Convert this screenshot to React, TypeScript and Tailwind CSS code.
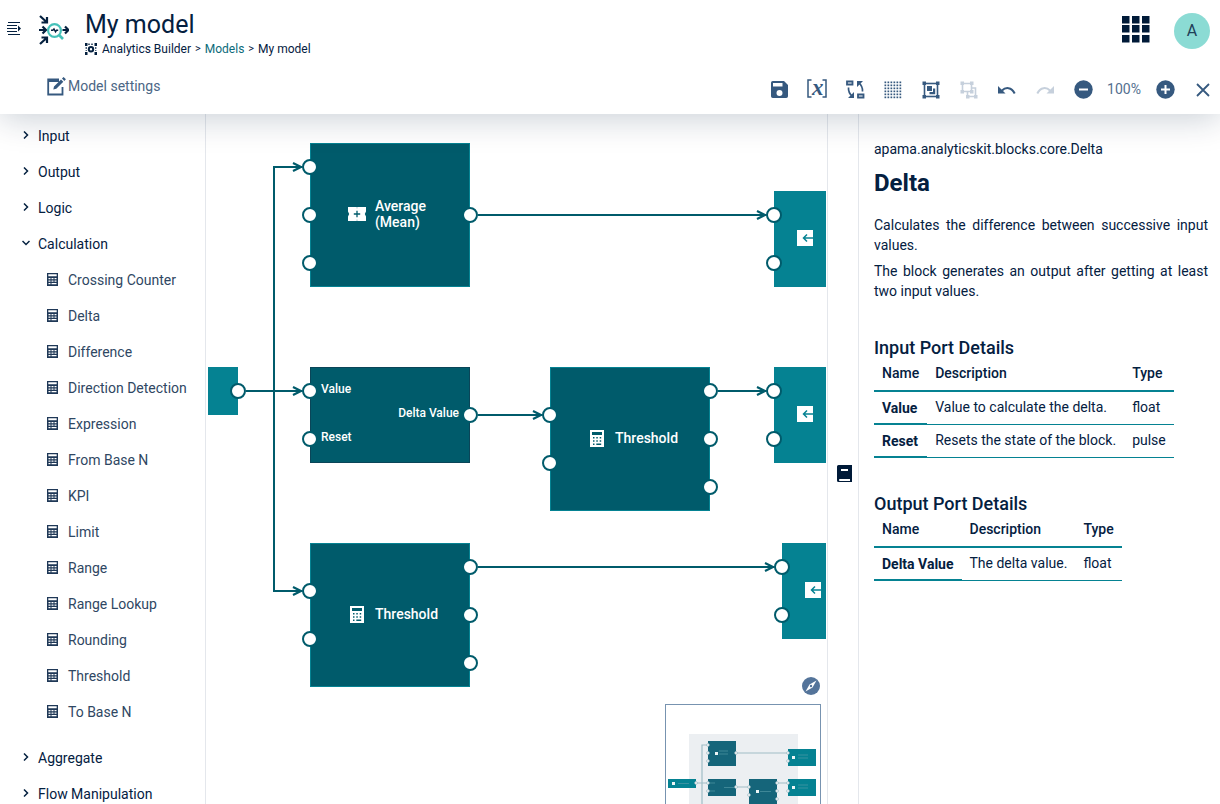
import React from "react";

type IconProps = { className?: string };

/* ---------- icons ---------- */

const MenuIcon = () => (
  <svg width="14" height="13" viewBox="0 0 14 13" fill="#04203f" aria-hidden="true">
    <path d="M1 0h12v1H1zM0 3h10v1H0zM0 6h10v1H0zM0 9h10v1H0zM1 12h12v1H1zM11 3.5l3 3-3 3z" />
  </svg>
);

const BuilderLogo = () => (
  <svg width="30" height="30" viewBox="0 0 30 30" fill="none" aria-hidden="true">
    <g stroke="#04203f" strokeWidth="2.200">
      <path d="M1 1l6 5.500M8 2v5.500H2.500" />
      <path d="M1 29l6-5.500M8 28v-5.500H2.500" />
      <path d="M0 15h6M3.500 11.500L7 15l-3.500 3.500" />
      <path d="M23.500 15h5.500M26 11.500l3.500 3.500-3.500 3.500" />
    </g>
    <circle cx="15.500" cy="15.500" r="6.400" stroke="#45c1b9" strokeWidth="2.200" />
    <path d="M20 20l4 4" stroke="#45c1b9" strokeWidth="2.600" />
    <path d="M12 15.300h1.800l1.200-1.300 1.500 2.800 1-1.500h1.700" stroke="#04203f" strokeWidth="1.400" />
  </svg>
);

const CrumbIcon = () => (
  <svg width="12" height="12" viewBox="0 0 12 12" fill="none" aria-hidden="true">
    <path d="M0 0h2.500v3H0zM9.500 0H12v3H9.500zM0 9h2.500v3H0zM9.500 9H12v3H9.500z" fill="#04203f" />
    <path d="M3 1.200h6M1.200 4v4M10.800 4v4" stroke="#04203f" strokeDasharray="2 1" />
    <circle cx="6" cy="6.300" r="2.200" stroke="#04203f" strokeWidth="2" />
  </svg>
);

const EditIcon = () => (
  <svg width="19" height="19" viewBox="0 0 19 19" fill="none" aria-hidden="true">
    <path d="M12 2.500H1.200v15h14.300V10" stroke="#36597f" strokeWidth="1.800" />
    <path d="M1 2h11v3H1z" fill="#36597f" />
    <path d="M7 9.500L14 2.500l2.300 2.300-7 7L6.300 12.600zM15 1.600L16.600 0l2.300 2.300-1.600 1.600z" fill="#36597f" />
  </svg>
);

const SaveIcon = () => (
  <svg width="17" height="17" viewBox="0 0 17 17" aria-hidden="true">
    <path
      fill="currentColor"
      fillRule="evenodd"
      d="M1.800 0H13l4 4v11.200A1.800 1.800 0 0115.200 17H1.800A1.800 1.800 0 010 15.200V1.800A1.800 1.800 0 011.800 0zM2 2v3.600h9.500V2zM8.500 9a3 3 0 100 6 3 3 0 000-6z"
    />
  </svg>
);

const VariableIcon = () => (
  <span className="flex h-5 items-center pb-0.5">
    <svg width="5" height="19" viewBox="0 0 5 19" fill="none" stroke="currentColor" strokeWidth="1.500" aria-hidden="true">
      <path d="M4.500 1H1v17h3.500" />
    </svg>
    <i className="w-2.5 pb-0.5 text-center font-['Liberation_Serif',serif] text-[23px] leading-4 font-bold">x</i>
    <svg width="5" height="19" viewBox="0 0 5 19" fill="none" stroke="currentColor" strokeWidth="1.500" aria-hidden="true">
      <path d="M.5 1H4v17H.5" />
    </svg>
  </span>
);

const SwapIcon = () => (
  <svg width="19" height="19" viewBox="0 0 19 19" fill="none" stroke="currentColor" aria-hidden="true">
    <path d="M1 1.500h5.500v3H1zM12 14.500h5.500v3H12z" strokeWidth="1.800" />
    <path d="M2.500 7.500c-.3 4 .8 6.500 4.200 9.200M16.500 11.500c.3-4-.8-6.500-4.200-9.200" strokeWidth="1.700" />
    <path d="M2 18h6v-6zM17 1h-6v6z" fill="currentColor" stroke="none" />
  </svg>
);

const GridIcon = () => (
  <svg width="18" height="18" viewBox="0 0 18 18" fill="currentColor" aria-hidden="true">
    {[0, 1, 2, 3, 4, 5].map((r) =>
      [0, 1, 2, 3, 4, 5].map((c) => <rect key={`${r}-${c}`} x={c * 3 + 0.5} y={r * 3 + 0.5} width="1.700" height="1.700" />)
    )}
  </svg>
);

const GroupIcon = () => (
  <svg width="18" height="18" viewBox="0 0 18 18" fill="none" aria-hidden="true">
    <rect x="2.500" y="2.500" width="13" height="13" stroke="currentColor" strokeWidth="1.600" />
    <path d="M0.500.5h3.500V4H.5zM14 .5h3.500V4H14zM.5 14h3.500v3.500H.5zM14 14h3.500v3.500H14z" fill="currentColor" />
    <path d="M5 5h5v5H5zM11 7.500h2.200v5.700H7.500V11H11z" fill="currentColor" />
  </svg>
);

const UngroupIcon = () => (
  <svg width="18" height="18" viewBox="0 0 18 18" fill="none" aria-hidden="true">
    <path d="M2.500 2.500h9v8h-9zM12 7h3.500v8.500h-8V11" stroke="currentColor" strokeWidth="1.600" />
    <path
      d="M.5.500H4V4H.5zM10 .5h3.500V4H10zM.5 9H4v3.500H.5zM10 9h3.500v3.500H10zM14 14h3.500v3.500H14zM6 14h3.500v3.500H6z"
      fill="currentColor"
    />
  </svg>
);

const UndoIcon = ({ className }: IconProps) => (
  <svg className={className} width="18" height="10" viewBox="0 0 18 10" fill="none" aria-hidden="true">
    <path d="M4 5.500C7.500 2 13.500 1.800 16.700 8.500" stroke="currentColor" strokeWidth="2" />
    <path d="M0 1V8.500h7.500z" fill="currentColor" />
  </svg>
);

const ZoomGlyph = ({ plus = false }: { plus?: boolean }) => (
  <svg width="19" height="19" viewBox="0 0 19 19" aria-hidden="true">
    <circle cx="9.500" cy="9.500" r="9.200" fill="currentColor" />
    <path d={plus ? "M5 9.500h9M9.500 5v9" : "M5 9.500h9"} stroke="#fff" strokeWidth="2" />
  </svg>
);

const CloseIcon = () => (
  <svg width="14" height="14" viewBox="0 0 14 14" fill="none" aria-hidden="true">
    <path d="M1 1l12 12M13 1L1 13" stroke="currentColor" strokeWidth="1.800" />
  </svg>
);

const AppsIcon = () => (
  <svg width="28" height="28" viewBox="0 0 28 28" fill="#001a38" aria-hidden="true">
    {[0, 9, 19].map((y) => [0, 10, 20].map((x) => <rect key={`${x}-${y}`} x={x} y={y + 1} width="7.500" height="7.500" />))}
  </svg>
);

const Chevron = ({ className }: IconProps) => (
  <svg className={className} width="8" height="8" viewBox="0 0 8 8" fill="none" aria-hidden="true">
    <path d="M2 .5L5.500 4 2 7.500" stroke="#04203f" strokeWidth="1.500" />
  </svg>
);

const ListCalcIcon = () => (
  <svg className="mb-0.5" width="11" height="13" viewBox="0 0 11 13" aria-hidden="true">
    <path
      fill="#1f3857"
      fillRule="evenodd"
      d="M0 0h11v13H0zM1.300 1.300v2h8.400v-2zM1.500 5v1.300h2V5zm3 0v1.300h2V5zm3 0v1.300h2V5zm-6 2.500v1.300h2V7.500zm3 0v1.300h2V7.500zm3 0v1.300h2V7.500zm-6 2.500v1.300h2V10zm3 0v1.300h5V10z"
    />
  </svg>
);

const CalcIcon = () => (
  <svg width="14" height="17" viewBox="0 0 14 17" aria-hidden="true">
    <path
      fill="#fff"
      fillRule="evenodd"
      d="M0 0h14v17H0zM2 2v3h10V2zM3 7v1.500h1.500V7zm3.300 0v1.500h1.500V7zm3.400 0v1.500h1.500V7zM3 10.300v1.500h1.500v-1.500zm3.300 0v1.500h1.500v-1.500zm3.400 0v1.500h1.500v-1.500zM3 13.500V15h1.500v-1.500zm3.300 0V15h4.900v-1.500z"
    />
  </svg>
);

const TicketIcon = () => (
  <svg width="18" height="14" viewBox="0 0 18 14" aria-hidden="true">
    <path fill="#fff" d="M0 0h18v4.500L16.800 7l1.200 2.500V14H0V9.500L1.200 7 0 4.500z" />
    <path d="M9 3.800v6.400M5.800 7h6.400" stroke="#005b6b" strokeWidth="1.300" />
    <path d="M9 .2v1.200M9 12.600v1.200" stroke="#8fb8bf" strokeWidth="1" />
  </svg>
);

const OutputIcon = () => (
  <svg width="16" height="16" viewBox="0 0 16 16" fill="none" aria-hidden="true">
    <rect width="16" height="16" fill="#fff" />
    <path d="M16 8H6.500M10 4.500L6.500 8l3.500 3.500" stroke="#058292" strokeWidth="1.500" />
  </svg>
);

const BookIcon = () => (
  <svg width="15" height="17" viewBox="0 0 15 17" aria-hidden="true">
    <path d="M1.500 0H15v17H1.500A1.500 1.500 0 010 15.500v-14A1.500 1.500 0 011.500 0z" fill="#001a38" />
    <path d="M4 5h7M2.200 15H13" stroke="#fff" strokeWidth="1.800" />
  </svg>
);

const CompassIcon = () => (
  <svg width="18" height="18" viewBox="0 0 18 18" aria-hidden="true">
    <circle cx="9" cy="9" r="9" fill="#54749a" />
    <path d="M14.500 3.500l-4 7-7 4 4-7z" fill="#fff" />
    <circle cx="9" cy="9" r="1.200" fill="#54749a" />
  </svg>
);

/* ---------- header ---------- */

const ToolButton = ({ label, disabled, children }: { label: string; disabled?: boolean; children: React.ReactNode }) => (
  <button
    type="button"
    aria-label={label}
    disabled={disabled}
    className="flex h-[30px] w-[30px] items-center justify-center text-[#36597f] disabled:text-[#c6d0dc]"
  >
    {children}
  </button>
);

const Header = () => (
  <header className="relative z-10 shrink-0 bg-white shadow-[0_4px_32px_rgba(4,32,63,0.22)]">
    <div className="flex h-[62px] items-center pr-2.5 pl-[7px]">
      <button type="button" aria-label="Toggle navigator" className="mb-1.5">
        <MenuIcon />
      </button>
      <div className="mb-0.5 ml-[18px]">
        <BuilderLogo />
      </div>
      <div className="ml-4 pt-1">
        <h1 className="text-[25px] leading-8">My model</h1>
        <nav aria-label="Breadcrumb" className="flex items-center gap-1 text-xs leading-4">
          <CrumbIcon />
          <span className="ml-px">Analytics Builder</span>
          <span className="text-[11px]">&gt;</span>
          <a href="#models" className="text-[#0b6a7a]">Models</a>
          <span className="text-[11px]">&gt;</span>
          <span>My model</span>
        </nav>
      </div>
      <button type="button" aria-label="Applications" className="mb-1 ml-auto">
        <AppsIcon />
      </button>
      <button
        type="button"
        aria-label="User"
        className="ml-6 flex h-9 w-9 items-center justify-center rounded-full bg-[#8bdbd4] text-base text-[#1f4058]"
      >
        A
      </button>
    </div>
    <div className="flex h-[52px] items-center justify-between pr-0.5 pl-[47px]">
      <button type="button" className="flex items-center gap-0.5 pb-1 text-sm text-[#4b6685]">
        <EditIcon />
        Model settings
      </button>
      <div className="flex items-center gap-2 pt-[3px]">
        <ToolButton label="Save"><SaveIcon /></ToolButton>
        <ToolButton label="Template parameters"><VariableIcon /></ToolButton>
        <ToolButton label="Switch layout"><SwapIcon /></ToolButton>
        <ToolButton label="Grid"><GridIcon /></ToolButton>
        <ToolButton label="Group"><GroupIcon /></ToolButton>
        <ToolButton label="Ungroup" disabled><UngroupIcon /></ToolButton>
        <ToolButton label="Undo"><UndoIcon /></ToolButton>
        <ToolButton label="Redo" disabled><UndoIcon className="-scale-x-100" /></ToolButton>
        <ToolButton label="Zoom out"><ZoomGlyph /></ToolButton>
        <span className="w-9 pb-0.5 text-center text-sm text-[#54708f]">100%</span>
        <ToolButton label="Zoom in"><ZoomGlyph plus /></ToolButton>
        <ToolButton label="Close"><CloseIcon /></ToolButton>
      </div>
    </div>
  </header>
);

/* ---------- palette ---------- */

const calculationBlocks = [
  "Crossing Counter", "Delta", "Difference", "Direction Detection", "Expression", "From Base N", "KPI",
  "Limit", "Range", "Range Lookup", "Rounding", "Threshold", "To Base N",
];

const Category = ({ name, open }: { name: string; open?: boolean }) => (
  <button type="button" aria-expanded={!!open} className="flex h-9 w-full items-center gap-2 pl-[22px]">
    <Chevron className={open ? "mb-0.5 rotate-90" : "mb-0.5"} />
    {name}
  </button>
);

const Palette = () => (
  <aside className="w-[206px] shrink-0 overflow-hidden border-r border-[#e4e7ec] pt-1 text-sm">
    {["Input", "Output", "Logic"].map((name) => <Category key={name} name={name} />)}
    <Category name="Calculation" open />
    <ul className="mb-2.5">
      {calculationBlocks.map((name) => (
        <li key={name} className="flex h-9 items-center gap-2.5 pl-[47px] text-[#2f4763]">
          <ListCalcIcon />
          {name}
        </li>
      ))}
    </ul>
    {["Aggregate", "Flow Manipulation"].map((name) => <Category key={name} name={name} />)}
  </aside>
);

/* ---------- canvas ---------- */

type Port = { side: "left" | "right"; y: number; label?: string };
type Block = {
  id: string;
  x: number;
  y: number;
  w: number;
  h: number;
  kind: "process" | "io" | "selected";
  icon?: React.ReactNode;
  label?: string;
  ports: Port[];
};

const left = (y: number, label?: string): Port => ({ side: "left", y, label });
const right = (y: number, label?: string): Port => ({ side: "right", y, label });

const blocks: Block[] = [
  { id: "source", x: -130, y: 253, w: 160, h: 48, kind: "io", ports: [right(24)] },
  { id: "average", x: 102, y: 29, w: 160, h: 144, kind: "process", icon: <TicketIcon />, label: "Average (Mean)", ports: [left(24), left(72), left(120), right(72)] },
  { id: "delta", x: 102, y: 253, w: 160, h: 96, kind: "selected", ports: [left(24, "Value"), left(72, "Reset"), right(48, "Delta Value")] },
  { id: "threshold-1", x: 342, y: 253, w: 160, h: 144, kind: "process", icon: <CalcIcon />, label: "Threshold", ports: [left(48), left(96), right(24), right(72), right(120)] },
  { id: "threshold-2", x: 102, y: 429, w: 160, h: 144, kind: "process", icon: <CalcIcon />, label: "Threshold", ports: [left(48), left(96), right(24), right(72), right(120)] },
  { id: "output-1", x: 566, y: 77, w: 160, h: 96, kind: "io", icon: <OutputIcon />, ports: [left(24), left(72)] },
  { id: "output-2", x: 566, y: 253, w: 160, h: 96, kind: "io", icon: <OutputIcon />, ports: [left(24), left(72)] },
  { id: "output-3", x: 574, y: 429, w: 160, h: 96, kind: "io", icon: <OutputIcon />, ports: [left(24), left(72)] },
];

const wires = [
  "M66 278V53H94",
  "M66 276V477H94",
  "M38 277H94",
  "M270 101H558",
  "M270 301H334",
  "M510 277H558",
  "M270 453H566",
];

const arrowTips = [[94, 53], [94, 477], [94, 277], [558, 101], [334, 301], [558, 277], [566, 453]];

const blockStyles = {
  process: "border border-[#058292] bg-[#005b6b]",
  selected: "border border-[#0a4558] bg-[#005b6b]",
  io: "border border-[#058292] bg-[#058292]",
};

const BlockView = ({ block }: { block: Block }) => (
  <div
    className={`absolute ${blockStyles[block.kind]}`}
    style={{ left: block.x, top: block.y, width: block.w, height: block.h }}
  >
    <div className={`flex h-full items-center gap-2 pb-0.5 ${block.kind === "io" ? "pl-5" : "pl-9"}`}>
      <span className="flex w-5 shrink-0 justify-center">{block.icon}</span>
      {block.label && <span className="w-20 text-sm leading-4 font-medium text-white">{block.label}</span>}
    </div>
    {block.ports.map((port) => (
      <div
        key={`${port.side}-${port.y}`}
        className={`absolute flex h-4 items-center gap-[3px] ${port.side === "left" ? "-left-[9px]" : "-right-[9px] flex-row-reverse"}`}
        style={{ top: port.y - 9 }}
      >
        <span className="h-4 w-4 rounded-full border-2 border-[#005b6b] bg-white" />
        {port.label && <span className="pb-1 text-xs font-medium whitespace-nowrap text-white">{port.label}</span>}
      </div>
    ))}
  </div>
);

const Minimap = () => {
  const inView = "#15657a";
  const io = "#058292";
  const boxes: [number, number, number, number, string][] = [
    [3, 75, 28, 9, io],
    [43, 37, 28, 25, inView],
    [43, 75, 28, 17, inView],
    [84, 75, 28, 25, inView],
    [123, 45, 28, 17, io],
    [123, 75, 28, 17, io],
  ];
  const dots = [
    [31, 79], [43, 41], [43, 49], [43, 57], [71, 49], [123, 49], [123, 57], [43, 79], [43, 87],
    [71, 83], [84, 83], [84, 91], [112, 79], [112, 87], [112, 95], [123, 79], [123, 87],
  ];
  const icons = [[7, 78], [50, 48], [127, 52], [127, 82], [91, 86]];
  return (
    <div className="absolute right-[5px] bottom-0">
      <button type="button" aria-label="Toggle overview" className="mr-px mb-[9px] ml-auto block">
        <CompassIcon />
      </button>
      <div className="h-[100px] w-[156px] border-x border-t border-[#7793b0] bg-white">
        <svg width="154" height="99" viewBox="1 1 154 99" aria-hidden="true">
          <rect x="24" y="30" width="109" height="71" fill="#eceff2" />
          <path d="M37 79V41h6M37 79v22M31 79h12M71 49h52M71 83h13M112 79h11" fill="none" stroke="#a0bdc6" strokeWidth="1.200" />
          {boxes.map(([x, y, w, h, fill]) => (
            <rect key={`${x}-${y}`} x={x} y={y} width={w} height={h} fill={fill} />
          ))}
          <path d="M13 79.500h11M54 47h9M54 50h9M133 51h10M133 54h10M133 81h10M133 84h10M95 87.500h11M59 83.500h11M44 79h6M44 87h6" stroke="#5b9dab" strokeWidth=".6" />
          {icons.map(([x, y]) => <rect key={`${x}-${y}`} x={x} y={y} width="3" height="3" fill="#eef5f6" />)}
          {dots.map(([x, y]) => <circle key={`${x}-${y}`} cx={x} cy={y} r="1.400" fill="#fff" stroke="#86aab5" strokeWidth=".6" />)}
        </svg>
      </div>
    </div>
  );
};

const Canvas = () => (
  <main className="relative mr-px ml-0.5 min-w-0 flex-1 overflow-hidden">
    {blocks.map((block) => <BlockView key={block.id} block={block} />)}
    <svg className="pointer-events-none absolute top-0 left-0" width="620" height="690" fill="none" stroke="#005b6b" aria-hidden="true">
      {wires.map((d) => <path key={d} d={d} strokeWidth="2" />)}
      {arrowTips.map(([x, y]) => <path key={`${x}-${y}`} d={`M${x - 9} ${y - 4}L${x - 1} ${y}L${x - 9} ${y + 4}`} strokeWidth="2.200" />)}
    </svg>
    <Minimap />
  </main>
);

/* ---------- documentation ---------- */

const PortTable = ({ rows }: { rows: [string, string, string][] }) => (
  <table className="border-collapse text-left leading-5">
    <thead>
      <tr className="border-b-2 border-[#058292]">
        {["Name", "Description", "Type"].map((h) => (
          <th key={h} scope="col" className="px-2 pt-[3px] pb-[7px] font-medium">{h}</th>
        ))}
      </tr>
    </thead>
    <tbody>
      {rows.map(([name, description, type]) => (
        <tr key={name}>
          <th scope="row" className="border-b-2 border-[#058292] px-2 pt-1.5 pb-[5px] font-bold">{name}</th>
          <td className="border-b border-[#058292] px-2 pt-[5px] pb-1.5">{description}</td>
          <td className="border-b border-[#058292] px-2 pt-[5px] pb-1.5">{type}</td>
        </tr>
      ))}
    </tbody>
  </table>
);

const Documentation = () => (
  <section aria-label="Block reference" className="w-[362px] shrink-0 overflow-hidden border-l border-[#e4e7ec] pt-[25px] pr-3 pl-[15px] text-sm leading-5">
    <p>apama.analyticskit.blocks.core.Delta</p>
    <h2 className="mt-2 text-2xl leading-8 font-bold">Delta</h2>
    <p className="mt-4 text-justify">Calculates the difference between successive input values.</p>
    <p className="mt-1.5 text-justify">The block generates an output after getting at least two input values.</p>
    <h3 className="mt-[35px] text-lg leading-6 font-medium">Input Port Details</h3>
    <PortTable
      rows={[
        ["Value", "Value to calculate the delta.", "float"],
        ["Reset", "Resets the state of the block.", "pulse"],
      ]}
    />
    <h3 className="mt-[34px] text-lg leading-6 font-medium">Output Port Details</h3>
    <PortTable rows={[["Delta Value", "The delta value.", "float"]]} />
  </section>
);

export default function App() {
  return (
    <div className="flex h-screen flex-col overflow-hidden bg-white font-[Roboto,sans-serif] text-[#04203f]">
      <Header />
      <div className="flex min-h-0 flex-1">
        <Palette />
        <Canvas />
        <div className="flex w-[31px] shrink-0 items-center justify-center border-l border-[#e4e7ec] pt-7 pl-[3px]">
          <button type="button" aria-label="Toggle block reference">
            <BookIcon />
          </button>
        </div>
        <Documentation />
      </div>
    </div>
  );
}
